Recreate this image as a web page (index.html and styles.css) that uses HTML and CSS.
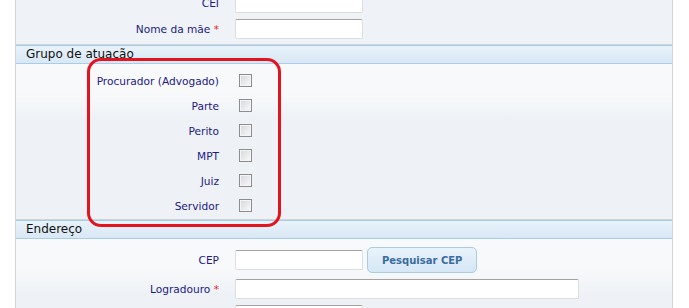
FILE: index.html
```html
<!DOCTYPE html>
<html>

    <head>
        <title>Cadastro de Pessoa</title>
        <link rel="stylesheet" href="styles.css">
    </head>

    <body>
        <div class="painel">
            <div class="secao">
                <div class="secao-corpo">
                    <div class="linha">
                        <label class="rotulo">CEI</label>
                        <div class="campo"><input type="text" class="texto curto"></div>
                    </div>
                    <div class="linha">
                        <label class="rotulo">Nome da mãe <span class="obrig">*</span></label>
                        <div class="campo"><input type="text" class="texto curto"></div>
                    </div>
                </div>
            </div>

            <div class="secao">
                <div class="secao-titulo">Grupo de atuação</div>
                <div class="secao-corpo">
                    <div class="linha-check">
                        <label class="rotulo">Procurador (Advogado)</label>
                        <div class="campo"><input type="checkbox" class="marcador"></div>
                    </div>
                    <div class="linha-check">
                        <label class="rotulo">Parte</label>
                        <div class="campo"><input type="checkbox" class="marcador"></div>
                    </div>
                    <div class="linha-check">
                        <label class="rotulo">Perito</label>
                        <div class="campo"><input type="checkbox" class="marcador"></div>
                    </div>
                    <div class="linha-check">
                        <label class="rotulo">MPT</label>
                        <div class="campo"><input type="checkbox" class="marcador"></div>
                    </div>
                    <div class="linha-check">
                        <label class="rotulo">Juiz</label>
                        <div class="campo"><input type="checkbox" class="marcador"></div>
                    </div>
                    <div class="linha-check">
                        <label class="rotulo">Servidor</label>
                        <div class="campo"><input type="checkbox" class="marcador"></div>
                    </div>
                </div>
            </div>

            <div class="secao">
                <div class="secao-titulo">Endereço</div>
                <div class="secao-corpo endereco">
                    <div class="linha">
                        <label class="rotulo">CEP</label>
                        <div class="campo">
                            <input type="text" class="texto curto">
                            <button class="botao">Pesquisar CEP</button>
                        </div>
                    </div>
                    <div class="linha">
                        <label class="rotulo">Logradouro <span class="obrig">*</span></label>
                        <div class="campo"><input type="text" class="texto longo"></div>
                    </div>
                    <div class="linha">
                        <label class="rotulo"></label>
                        <div class="campo"><input type="text" class="texto curto"></div>
                    </div>
                </div>
            </div>

            <!-- marcacao vermelha sobre o grupo de atuacao -->
            <div class="destaque"></div>
        </div>
    </body>

</html>
```

FILE: styles.css
```css
html,
body {
    margin: 0;
    padding: 0;
    background-color: #fff;
    overflow: hidden;
    font-family: "DejaVu Sans", Verdana, sans-serif;
}

.painel {
    position: relative;
    width: 658px;
    box-sizing: border-box;
    margin: -14px 0 0 15px;
    border-left: 1px solid #d3d6d9;
    border-right: 1px solid #d3d6d9;
}

.secao-titulo {
    height: 17px;
    line-height: 17px;
    padding-left: 10px;
    font-size: 12px;
    color: #111;
    border-top: 1px solid #a9cde9;
    border-bottom: 1px solid #a9cde9;
    background: linear-gradient(to bottom, #e8f2fa, #d9e8f5);
}

.secao-corpo {
    padding: 4px 0 1px;
    border-bottom: 1px solid #cfd4d8;
    background: linear-gradient(to bottom, #f8f9fb 0, #f8f9fb 30px, #eef2f6 55px, #eef2f6 100%);
}

.secao:first-child .secao-corpo {
    padding-bottom: 2px;
    background: #eff3f7;
}

.secao-corpo.endereco {
    padding-top: 5px;
}

.linha,
.linha-check {
    display: flex;
    align-items: center;
}

.linha {
    padding: 3px 0;
}

.linha-check {
    height: 25px;
}

.rotulo {
    width: 203px;
    margin-right: 16px;
    text-align: right;
    font-size: 10.6px;
    color: #221a84;
}

.obrig {
    color: #e3262c;
}

.campo {
    display: flex;
    align-items: center;
    gap: 4px;
}

.texto {
    box-sizing: border-box;
    height: 20px;
    margin: 0;
    padding: 0 3px;
    background-color: #fff;
    border: 1px solid #dcdfe2;
    border-top-color: #a3a3a3;
    border-radius: 2px;
    outline: none;
}

.texto.curto {
    width: 128px;
}

.texto.longo {
    width: 344px;
}

.marcador {
    -webkit-appearance: none;
    appearance: none;
    width: 13px;
    height: 13px;
    margin: 0 0 0 4px;
    border: 1px solid #8b8d8e;
    background: linear-gradient(135deg, #d4d7da, #fafafa);
    box-shadow: inset 0 0 0 1px #f5f5f5;
}

.botao {
    height: 26px;
    padding: 0 14px;
    font-family: "DejaVu Sans", Verdana, sans-serif;
    font-size: 10px;
    font-weight: bold;
    color: #3a6c9c;
    border: 1px solid #a9cbe6;
    border-radius: 5px;
    background: linear-gradient(to bottom, #e9f3fb, #d5e7f6);
    cursor: pointer;
}

.destaque {
    position: absolute;
    left: 71px;
    top: 72px;
    width: 194px;
    height: 169px;
    box-sizing: border-box;
    border: 3px solid #e3141d;
    border-radius: 14px;
    pointer-events: none;
}
```
